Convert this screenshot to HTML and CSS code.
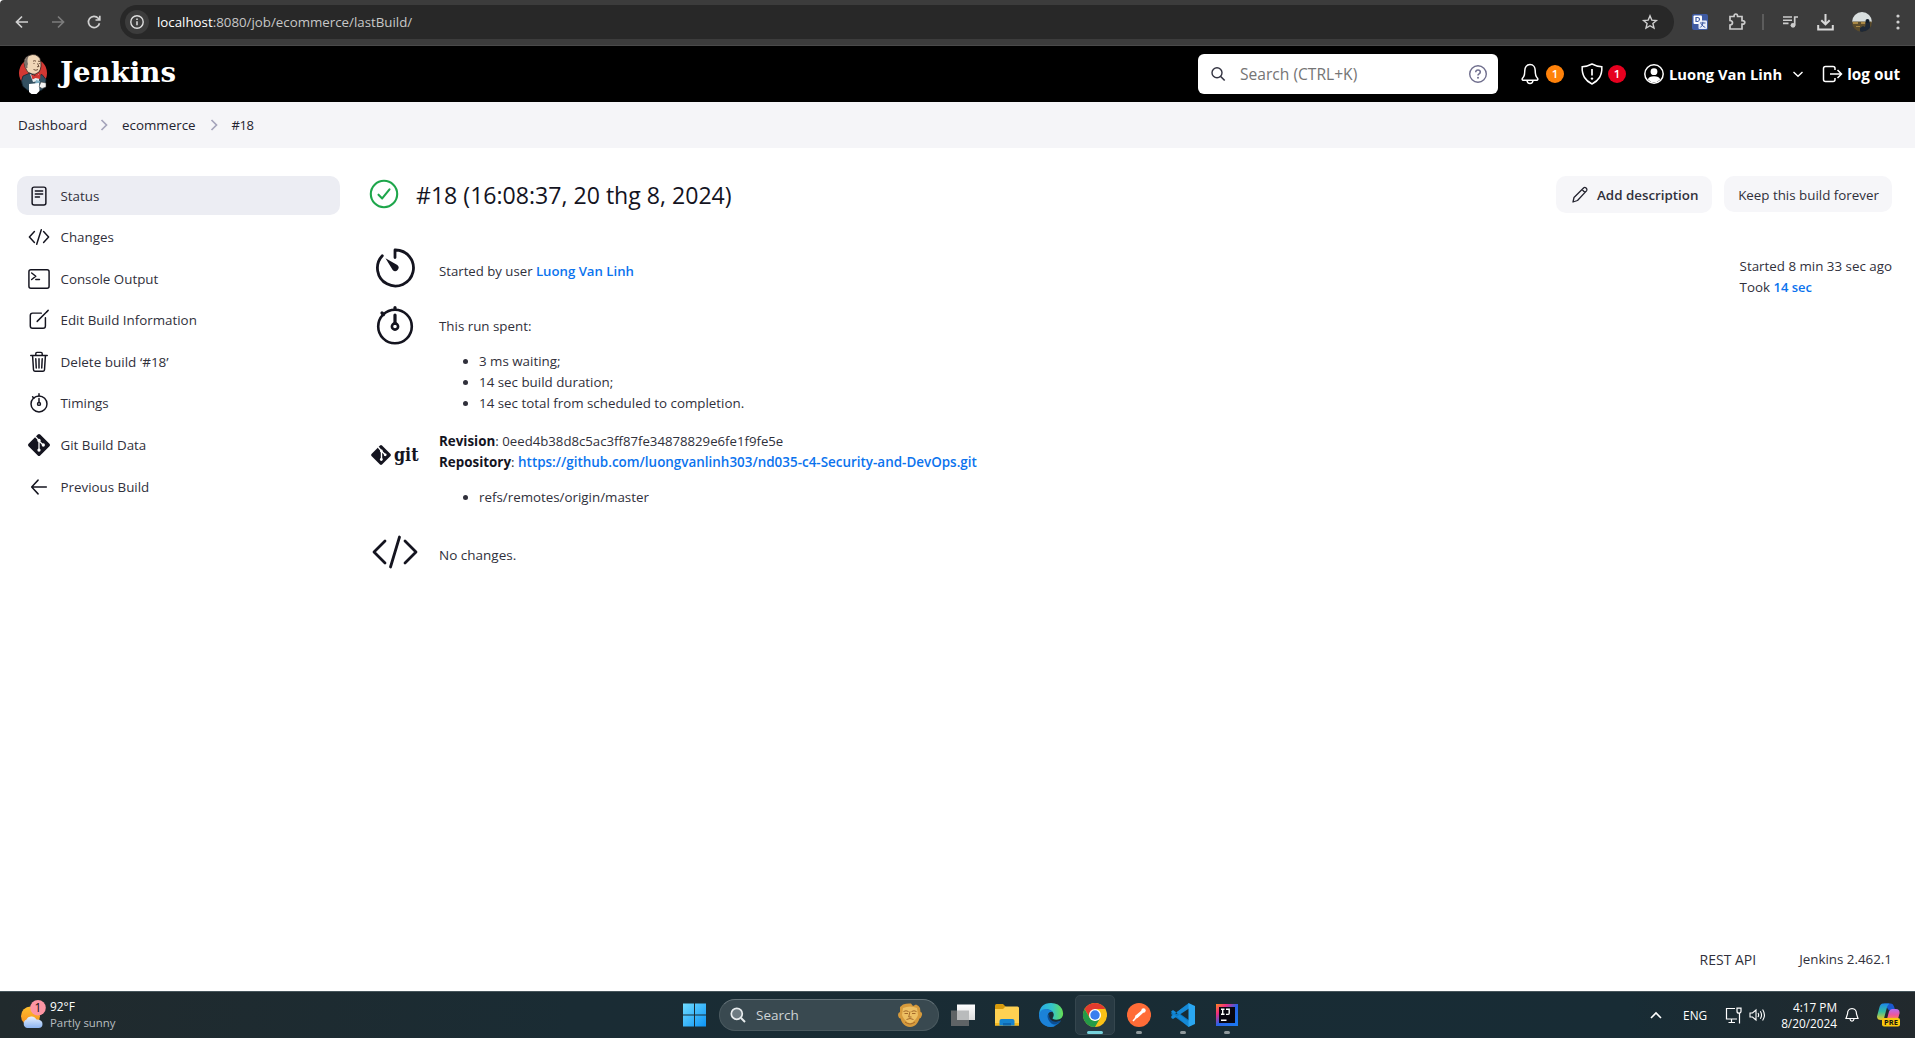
FILE: index.html
```html
<!DOCTYPE html>
<html lang="en">
<head>
<meta charset="utf-8">
<title>ecommerce #18 [Jenkins]</title>
<link rel="stylesheet" href="styles.css">
</head>
<body>
<div class="toolbar">
  <svg class="nav-icon" viewBox="0 0 16 16"><path d="M14 8H3M8 2.5 2.5 8 8 13.500" stroke="#d0d0d0"/></svg>
  <svg class="nav-icon" viewBox="0 0 16 16"><path d="M2 8h11M8 2.500 13.500 8 8 13.500" stroke="#7c7c7c"/></svg>
  <svg class="nav-icon" viewBox="0 0 16 16"><path d="M13.500 9.200A5.600 5.600 0 1 1 12.300 4.300L13.500 5.500M13.800 1.800V6H9.500" stroke="#d0d0d0"/></svg>
  <div class="url-bar">
    <span class="site-info"><svg width="14" height="14" viewBox="0 0 14 14"><circle cx="7" cy="7" r="6.200" fill="none" stroke="#dedede" stroke-width="1.400"/><path d="M7 6.200v4.100M7 3.500v1.400" stroke="#dedede" stroke-width="1.500"/></svg></span>
    <span class="url"><b>localhost</b>:8080/job/ecommerce/lastBuild/</span>
    <svg class="star" width="16" height="16" viewBox="0 0 16 16"><path d="M8 1.800 9.800 6.100l4.600.4-3.500 3 1.100 4.600L8 11.700l-4 2.400 1.100-4.600-3.500-3 4.600-.4z" fill="none" stroke="#cfcfcf" stroke-width="1.400"/></svg>
  </div>
  <div class="tools">
    <svg width="16" height="16" viewBox="0 0 16 16"><rect width="16" height="16" rx="2" fill="#3f5ba3"/><rect x="1.500" y="1.500" width="8.500" height="8.500" rx="1" fill="#fff"/><path d="M4 3.500h1.500q2 0 2 2t-2 2H4z" fill="none" stroke="#3f5ba3" stroke-width="1.200"/><rect x="6.500" y="6.500" width="8.500" height="8.500" rx="1" fill="#e8edfa"/><path d="M8 9h5.500M10.800 7.800V9q-.3 3-2.500 4.500M9.300 10q1.500 2.500 4 3.500" fill="none" stroke="#3f5ba3"/></svg>
    <svg width="18" height="18" viewBox="0 0 18 18" class="t-ext"><path d="M2 3.500h4q0-2.500 1.800-2.500t1.800 2.500h4.400v4.200q2.800 0 2.800 1.700t-2.800 1.700v4.900H2v-4q2.500-.3 2.500-2.300T2 7.500z" fill="none" stroke="#cdcdcd" stroke-width="1.700"/></svg>
    <span class="divider"></span>
    <svg width="16" height="16" viewBox="0 0 16 16" class="t-media"><path d="M1 3h9M1 6.200h9M1 9.400h5.500" stroke="#cdcdcd" stroke-width="1.600"/><path d="M12.700 11V3H16" fill="none" stroke="#cdcdcd" stroke-width="1.700"/><circle cx="11" cy="11.300" r="2.400" fill="#cdcdcd"/></svg>
    <svg width="17" height="17" viewBox="0 0 17 17" class="t-down"><path d="M8.500 0v10M4.300 6.200l4.200 4.200 4.200-4.200M1.200 11v4.500h14.600V11" fill="none" stroke="#d8d8d8" stroke-width="2"/></svg>
    <svg width="20" height="20" viewBox="0 0 20 20" class="t-ava"><clipPath id="av"><circle cx="10" cy="10" r="10"/></clipPath><g clip-path="url(#av)"><path fill="#d9dfdf" d="M0 0h20v11H0z"/><path fill="#5b4c2c" d="M0 9.500h20V20H0z"/><path fill="#a78644" d="M1 10h5v2H1zM9 10h4v2H9zM4 14h4v1H4z"/><path fill="#1e2836" d="m8 16 3-2 2 1 1-5 2-2 2 3v9H8z"/><circle cx="15.500" cy="9" r="2" fill="#111d2a"/></g></svg>
    <svg width="4" height="16" viewBox="0 0 4 16"><g fill="#d0d0d0"><circle cx="2" cy="2" r="1.600"/><circle cx="2" cy="8" r="1.600"/><circle cx="2" cy="14" r="1.600"/></g></svg>
  </div>
</div>

<header class="header">
  <svg class="butler" width="30" height="40" viewBox="0 0 30 40">
    <ellipse cx="15" cy="19" rx="14" ry="14.500" fill="#d33833"/>
    <path d="M7 13Q4 4 11 1.500q7-3 11 3Q24.500 13 21 18q-4 3.500-8 2Q9 19 7 13z" fill="#f0d6b7" stroke="#2c2220" stroke-width=".8"/>
    <path d="M7.500 14Q4.500 5 11 1.500 8.500 6 10 10q-1 1.500-.5 4z" fill="#7b716a"/>
    <path d="M15 7.200q1.500-1 3 0M20 7.200l2 .2M19.500 9.500l1.500 3-2 .3M15.500 15.500q2.500 1.500 4.500 0M16 9v1M21.300 9v1" fill="none" stroke="#5b3e2d" stroke-width=".9"/>
    <path d="M5 22l7-3 6 3.500 6-2 4 5-1 8-4 3H10l-5-4q-3-6 0-10.500z" fill="#335061" stroke="#10202b" stroke-width=".7"/>
    <path d="m12 20 6 3 3-3v7l-6 1z" fill="#e7edef"/><path d="m13 20.500 4.500 1.500 5-2-.3 5-4.700-1-3 1.500z" fill="#d33833"/>
    <path d="M18 26l4 1-1 4-4-1z" fill="#81b0c4"/>
    <path d="m11 30 10-1 .5 8-3 3h-5l-2.500-2z" fill="#fff"/><path d="M23 28l5 1v4l-4 1.500-3-2z" fill="#f3f3f3" stroke="#333" stroke-width=".5"/>
  </svg>
  <svg class="wordmark" width="120" height="40" viewBox="0 0 120 40"><text x="1" y="28" textLength="116" lengthAdjust="spacingAndGlyphs">Jenkins</text></svg>
  <div class="search-box">
    <svg width="16" height="16" viewBox="0 0 16 16"><circle cx="7" cy="6.800" r="5" fill="none" stroke="#333341" stroke-width="1.400"/><path d="m10.700 10.500 4 4" stroke="#333341" stroke-width="1.600"/></svg>
    <span>Search (CTRL+K)</span>
    <svg width="18" height="18" viewBox="0 0 18 18"><circle cx="9" cy="9" r="8.300" fill="none" stroke="#706f8e" stroke-width="1.400"/><path d="M6.700 7.200Q6.800 5 9 5t2.300 2q0 1.100-1.200 1.800T9 10.500" fill="none" stroke="#706f8e" stroke-width="1.500"/><circle cx="9" cy="12.800" r="1" fill="#706f8e"/></svg>
  </div>
  <svg class="bell" width="18" height="22" viewBox="0 0 18 22"><path d="M9 1.500C5.500 1.500 3.800 4.500 3.800 7.500c0 5-1 6.500-2.300 7.700-.7.800-.3 2 .7 2h13.600c1 0 1.400-1.200.7-2-1.300-1.200-2.300-2.700-2.300-7.700 0-3-1.700-6-5.200-6zM6 17.500q.3 3 3 3t3-3" fill="none" stroke="#fff" stroke-width="1.500"/></svg>
  <span class="badge orange">1</span>
  <svg class="shield" width="22" height="22" viewBox="0 0 22 22"><path d="M11 1Q6 3.500 1.200 3.800 .8 10 3.500 14.500 6 18.500 11 21q5-2.500 7.500-6.500Q21.200 10 20.800 3.800 16 3.500 11 1z" fill="none" stroke="#fff" stroke-width="1.500"/><path d="M11 6v6.500" stroke="#fff" stroke-width="1.700"/><circle cx="11" cy="15.600" r="1.200" fill="#fff"/></svg>
  <span class="badge red">1</span>
  <svg class="user" width="20" height="20" viewBox="0 0 20 20"><circle cx="10" cy="10" r="9.200" fill="none" stroke="#fff" stroke-width="1.500"/><circle cx="10" cy="7.700" r="3.400" fill="#fff"/><path d="M3.800 15.500Q5 12.300 10 12.300t6.200 3.200Q13.700 18.200 10 18.200t-6.200-2.700z" fill="#fff"/></svg>
  <b class="user-name">Luong Van Linh</b>
  <svg class="caret" width="12" height="12" viewBox="0 0 12 12"><path d="m1.500 4 4.500 4.300L10.500 4" fill="none" stroke="#fff" stroke-width="1.400"/></svg>
  <svg class="exit" width="21" height="18" viewBox="0 0 21 18"><path d="M13 5V3.500Q13 1.500 11 1.500H3.500q-2 0-2 2v11q0 2 2 2H11q2 0 2-2V13M8 9h11M15.500 5l4 4-4 4" fill="none" stroke="#fff" stroke-width="1.500"/></svg>
  <b class="logout">log out</b>
</header>

<nav class="crumbs">
  <span class="c1">Dashboard</span>
  <svg width="8" height="12" viewBox="0 0 8 12"><path d="m1.500 1 5 5-5 5"/></svg>
  <span class="c2">ecommerce</span>
  <svg width="8" height="12" viewBox="0 0 8 12"><path d="m1.500 1 5 5-5 5"/></svg>
  <span class="c3">#18</span>
</nav>

<div class="content">
  <aside class="side">
    <a class="active"><svg viewBox="0 0 24 24"><rect x="4.500" y="2.300" width="15" height="19.400" rx="2.200"/><path d="M8 6.500h8M8 9.800h8M8 13h4.500"/></svg>Status</a>
    <a><svg viewBox="0 0 24 24"><path d="M7 6 1.500 12 7 18M17 6l5.500 6-5.500 6M14.500 4l-5 16"/></svg>Changes</a>
    <a><svg viewBox="0 0 24 24"><rect x="1" y="2" width="22" height="20" rx="2.200"/><path d="m4 5.500 4.500 3.500L4 12.500M8.500 12.500h4"/></svg>Console Output</a>
    <a><svg viewBox="0 0 24 24"><path d="M14.500 4.500H5q-2.500 0-2.500 2.500v11.500Q2.500 21 5 21h11.500Q19 21 19 18.500V9.500M10 13.500 20.500 3"/><path d="m20.500 3 1.500-1.500"/></svg>Edit Build Information</a>
    <a><svg viewBox="0 0 24 24"><path d="m5 5 1 15.500q0 1.500 1.500 1.500h9q1.500 0 1.500-1.500L19 5M3 5h18M8.500 5V3q0-1.500 1.300-1.500h4.400q1.300 0 1.300 1.500v2M12 8.500v10M8.500 8.500l.5 10M15.500 8.500l-.5 10"/></svg><span class="wide-text">Delete build ‘#18’</span></a>
    <a><svg viewBox="0 0 24 24"><circle cx="12" cy="13" r="8.700"/><path d="M12 7v4M12 2v2.200M5 5.200l1.500 1.500"/><circle cx="12" cy="13" r="1.600"/></svg>Timings</a>
    <a><svg viewBox="0 0 24 24"><path class="solid" d="m10.700.6a1.800 1.800 0 0 1 2.600 0l10.100 10.100a1.800 1.800 0 0 1 0 2.600L13.300 23.400a1.800 1.800 0 0 1-2.600 0L.6 13.300a1.800 1.800 0 0 1 0-2.600z"/><path class="branch" d="m8.200 3 3.800 4v10.500M12 7.500l4.500 4.500"/><g class="nodes"><circle cx="12" cy="7" r="1.800"/><circle cx="12" cy="17.500" r="1.800"/><circle cx="16.700" cy="12" r="1.800"/></g></svg>Git Build Data</a>
    <a><svg viewBox="0 0 24 24"><path d="M20 12H4.500M11 4.500 4 12l7 7.500"/></svg>Previous Build</a>
  </aside>

  <main class="main">
    <div class="title-row">
      <svg width="30" height="30" viewBox="0 0 30 30"><circle cx="15" cy="15" r="13.200" fill="none" stroke="#1ea64b" stroke-width="2.100"/><path d="m9.500 15.700 3.700 3.700 7.300-9" fill="none" stroke="#1ea64b" stroke-width="2.100" stroke-linecap="round" stroke-linejoin="round"/></svg>
      <h1>#18 (16:08:37, 20 thg 8, 2024)</h1>
      <div class="actions">
        <button class="add"><svg width="18" height="18" viewBox="0 0 18 18"><path d="M2 16l1-4.500L12.800 1.700q1-.8 2.300.4t.6 2.500L6.500 14.500 2 16zM11 3.500 14.200 6.700" fill="none" stroke="#23232f" stroke-width="1.300" stroke-linejoin="round"/></svg>Add description</button>
        <button class="keep">Keep this build forever</button>
      </div>
    </div>
    <div class="body-row">
      <div class="facts">
        <div class="fact f1">
          <svg viewBox="0 0 48 48"><path d="M24 13.500V6A18 18 0 1 1 11.300 11.700" stroke-width="2.800"/><path class="solid" d="m14.500 14.200 11.800 6.800a3.400 3.400 0 1 1-4.600 5z"/></svg>
          <div>Started by user <a>Luong Van Linh</a></div>
        </div>
        <div class="fact f2">
          <svg viewBox="0 0 48 48"><circle cx="24" cy="25.500" r="16.800" stroke-width="2.600"/><circle cx="24" cy="25.500" r="3.100" stroke-width="2.600"/><path d="M24 22.500v-8.500M24 8V6.500M12.500 13.500 11 12" stroke-width="3.200"/></svg>
          <div>This run spent:
            <ul><li>3 ms waiting;</li><li>14 sec build duration;</li><li>14 sec total from scheduled to completion.</li></ul>
          </div>
        </div>
        <div class="fact f3">
          <svg viewBox="0 0 48 48"><path class="solid" d="m9 14.500q1-.9 2 0l8.500 8.500q.9 1 0 2L11 33.500q-1 .9-2 0L.5 25q-.9-1 0-2z"/><path class="branch" d="m7.500 16.500 3 3.500v8.500M10.500 20l3.500 3.500"/><g class="nodes"><circle cx="10.300" cy="20" r="1.400"/><circle cx="10.300" cy="28.500" r="1.400"/><circle cx="14.200" cy="23.800" r="1.400"/></g><text x="23" y="29.500" textLength="24.500" lengthAdjust="spacingAndGlyphs">git</text></svg>
          <div><b>Revision</b>: <span class="hash">0eed4b38d8c5ac3ff87fe34878829e6fe1f9fe5e</span><br><b>Repository</b>: <a class="repo">https://github.com/luongvanlinh303/nd035-c4-Security-and-DevOps.git</a>
            <ul><li>refs/remotes/origin/master</li></ul>
          </div>
        </div>
        <div class="fact f4">
          <svg viewBox="0 0 48 48"><path d="M14 13 3 24l11 11M34 13l11 11-11 11M28.500 9l-9 30" stroke-width="2.800"/></svg>
          <div>No changes.</div>
        </div>
      </div>
      <div class="timing">Started 8 min 33 sec ago<br>Took <a>14 sec</a></div>
    </div>
    <footer class="foot"><span class="api">REST API</span><span>Jenkins 2.462.1</span></footer>
  </main>
</div>

<div class="taskbar">
  <div class="weather">
    <svg width="26" height="30" viewBox="0 0 26 30"><defs><linearGradient id="sun" x2="0" y2="1"><stop stop-color="#ffc02e"/><stop offset="1" stop-color="#f58b1e"/></linearGradient><linearGradient id="cl" x2="0" y2="1"><stop stop-color="#e8f2ff"/><stop offset="1" stop-color="#8db5f2"/></linearGradient></defs><circle cx="9.500" cy="16" r="9.500" fill="url(#sun)"/><path d="M6 28a4.500 4.500 0 0 1-.5-8.500Q7 16 11 16.500q3.500.3 4.500 3 6 0 6 4.500 0 4-4 4z" fill="url(#cl)"/><circle cx="17" cy="7.800" r="7.800" fill="#fd95a3"/><text x="17" y="12" text-anchor="middle">1</text></svg>
    <div><strong>92°F</strong><br>Partly sunny</div>
  </div>
  <div class="apps">
    <svg width="24" height="24" viewBox="0 0 24 24"><defs><linearGradient id="win" x2="1" y2="1"><stop stop-color="#6fdcff"/><stop offset="1" stop-color="#0c93f5"/></linearGradient></defs><path fill="url(#win)" d="M0 .500h11v11H0zM12 .500h11v11H12zM0 12.500h11v11H0zM12 12.500h11v11H12z"/></svg>
    <div class="tb-search">
      <svg width="16" height="16" viewBox="0 0 16 16"><circle cx="6.800" cy="6.800" r="5.500" fill="#6e7b82" stroke="#e8ecee" stroke-width="1.700"/><path d="m11 11 4 4" stroke="#e8ecee" stroke-width="2"/></svg>
      <span>Search</span>
      <svg width="26" height="25" viewBox="0 0 26 25"><path d="M3 4 6 1.500Q10 0 14 .5l2 2.500 3-1.500q3 1 4 3.500l.5 4q2 0 1.500 3-1 3.500-2.500 3.500-2 6-5.500 7.500-4 2-8 0Q5 21 3.500 15.500q-2 0-2.500-3.500 0-2.500 2-3z" fill="#d69a3c"/><path d="M6 5q7-3 14 0l1 7q-2 6-8 8.500Q7 18 5 12z" fill="#edbf63"/><path d="M6.500 8.500q2.500-1.500 5 0M14.500 8.500q2.500-1.500 5 0M7.500 10.500h3.500M15 10.500h3.500M13 8.500l-1.300 5.500h2.800M9.500 16.500q3.500-2 7 0M8 19q5 4 10 0" fill="none" stroke="#a4692a"/></svg>
    </div>
    <svg class="tview" width="24" height="23" viewBox="0 0 24 23"><defs><linearGradient id="tv" x2="0" y2="1"><stop stop-color="#fff"/><stop offset="1" stop-color="#dcdcdc"/></linearGradient></defs><path fill="#5f6466" d="M0 6.500h18v15.500H0z"/><path fill="url(#tv)" d="M6 .5h18V16H6z"/><path fill="#b9bbbc" d="M6 6.500h12V16H6z"/></svg>
    <svg class="ic" viewBox="0 0 24 24"><path fill="#d89b0c" d="M0 2.500Q0 1 1.500 1H8l2.500 2.500V9H0z"/><path fill="#ffd152" d="M0 6h8l2.500-2.500h12Q24 3.500 24 5v17.500H0z"/><path fill="#f5b91f" d="M0 20h24v2.500H0z"/><path fill="#1583cf" d="M4.500 22.500V18q0-2 2-2h11q2 0 2 2v4.500z"/><path fill="#0d66ae" d="M8 20h8v2.500H8z"/></svg>
    <svg class="ic" viewBox="0 0 24 24"><defs><linearGradient id="eg" x2="1"><stop stop-color="#26a7e8"/><stop offset=".55" stop-color="#35c5c8"/><stop offset="1" stop-color="#66df52"/></linearGradient></defs><path fill="#0f6fc5" d="M.2 11Q0 18 5 21.800q7 4.500 14-.8 1.500-1.300 3-3.500-6 3-10 .5-3-2.500-2.500-6z"/><path fill="url(#eg)" d="M0 12Q.5 0 12 0q8 0 11 6 3 7-2 10-4 1.500-7 0-.8-.8.200-2 1.500-3-1-5.500Q9 5 4 8 1 10 0 12z"/><path fill="#1b82d8" d="M0 12q1-5.500 6-6 5.500 0 8 3-4-1-5.200 3Q8 17 13 21q2 2 4 1.500-5 3-11 0Q0 19 0 12z"/><path fill="#0c4d92" d="M8.700 12Q8 17 12.500 20.500q5 2.500 9.500-3-7 3-10.500-1Q9.500 14 10.500 11z"/></svg>
    <div class="tile"><svg class="ic" viewBox="0 0 24 24"><circle cx="12" cy="12" r="12" fill="#fbc116"/><path fill="#e33b2e" d="M1.600 6A12 12 0 0 1 22.400 6H12L7 15z"/><path fill="#249b48" d="M1.600 6A12 12 0 0 0 12 24l5.200-9L12 18 6.800 15z"/><circle cx="12" cy="12" r="6" fill="#fff"/><circle cx="12" cy="12" r="4.700" fill="#3a7fee"/></svg><i class="run wide"></i></div>
    <div class="app"><svg class="ic" viewBox="0 0 24 24"><circle cx="12" cy="12" r="12" fill="#ff6c37"/><path d="m6 18 7-7.500" stroke="#fff" stroke-width="1.500"/><path fill="#fff" d="m7.500 15.500 1-3 6-5 2 2-6 5.500z"/><circle cx="16.500" cy="7.500" r="2.200" fill="#fff"/></svg><i class="run"></i></div>
    <div class="app"><svg class="ic" viewBox="0 0 24 24"><path fill="#0b79c4" d="M17.500 0 5.500 11 2 8.500.3 9.500v1.800L18 24l.5-6.500L6.500 9z" /><path fill="#1589d6" d="M17.500 24 0 8.500 2 7l16 11.500zM.3 13v2L2 16 18 5.500V0z"/><path fill="#2aa7f2" d="m17.500 0 6.500 3v18l-6.500 3z"/></svg><i class="run"></i></div>
    <div class="app"><svg class="ic" viewBox="0 0 24 24"><defs><linearGradient id="ij" x2="1" y2="1"><stop stop-color="#ff8a1f"/><stop offset=".25" stop-color="#f02c7d"/><stop offset=".5" stop-color="#2b62e8"/><stop offset="1" stop-color="#187bf3"/></linearGradient></defs><path fill="url(#ij)" d="M1 1h22v22H1z"/><path fill="#080510" d="M4 4h16v16H4z"/><path d="M6 6.200h3.500M7.700 6.200v5M6 11.200h3.500M11 6.200h3.200v4q0 1.200-1.500 1.200H11M6 17.200h5.500" fill="none" stroke="#fff" stroke-width="1.400"/></svg><i class="run"></i></div>
  </div>
  <div class="tray">
    <svg class="up" width="12" height="8" viewBox="0 0 12 8"><path d="m1 7 5-5 5 5" fill="none" stroke="#fff" stroke-width="1.600"/></svg>
    <span class="lang">ENG</span>
    <svg class="net" width="17" height="17" viewBox="0 0 17 17"><path d="M10 1.500H1.500V12H12M6.500 12v3.500M3.500 15.500H10M14.500 6.500v10M12 1.200h4v3q0 2-2 2t-2-2z" fill="none" stroke="#fff" stroke-width="1.200"/></svg>
    <svg class="vol" width="18" height="14" viewBox="0 0 18 14"><path d="M1 5v4h2.500L7 12V2L3.500 5zM9 5q1.300 2 0 4M11.300 3.200q2.500 3.800 0 7.600M13.600 1.500q3.700 5.500 0 11" fill="none" stroke="#fff" stroke-width="1.100"/></svg>
    <div class="clock">4:17 PM<br>8/20/2024</div>
    <svg class="tbell" width="14" height="16" viewBox="0 0 14 16"><path d="M7 1.500Q2.500 1.800 2.500 7L1 11.500h12L11.500 7Q11.500 1.800 7 1.500zM5 12q.3 2.200 2 2.200T9 12" fill="none" stroke="#fff" stroke-width="1.200"/></svg>
    <svg width="24" height="24" viewBox="0 0 24 24"><defs><linearGradient id="ca" x2="0" y2="1"><stop stop-color="#1d88e8"/><stop offset=".5" stop-color="#35bda0"/><stop offset="1" stop-color="#f2cd22"/></linearGradient><linearGradient id="cb" x2="0" y2="1"><stop stop-color="#b26cf0"/><stop offset=".6" stop-color="#f0569b"/><stop offset="1" stop-color="#fb8b4a"/></linearGradient></defs><path fill="#1b58cf" d="M8 .500h7q2 0 3 3l1 3-6 1z"/><path fill="url(#ca)" d="M7 .500h6.500Q11.500 2 10.500 6L8 15.500Q7.500 17 5 17 1 17 1 13.500L3.500 4Q4.500.500 7 .500z"/><path fill="url(#cb)" d="M16 6h4q4 0 3.500 4.500L22 16H11l2-7.500Q14 6 16 6z"/><rect x="6" y="15" width="18" height="8.500" rx="2" fill="#fbc80e"/><text class="pre" x="15" y="22" text-anchor="middle">PRE</text></svg>
  </div>
</div>
</body>
</html>
```
FILE: styles.css
```css
* { box-sizing: border-box; }
body {
  margin: 0; width: 1915px; height: 1038px; overflow: hidden;
  display: flex; flex-direction: column;
  background: #fff; color: #14141f;
  font: 13.35px/21px "Open Sans", "Noto Sans", sans-serif;
}
svg { display: block; flex: none; overflow: visible; }

/* browser toolbar */
.toolbar { height: 46px; flex: none; background: #3c3c3c; border-bottom: 1px solid #4a4a4a; border-top-left-radius: 4px; display: flex; align-items: center; padding: 0 14px 1px 14px; }
.nav-icon { width: 16px; height: 16px; margin-right: 20px; fill: none; stroke-width: 1.7; }
.url-bar { width: 1554px; height: 34px; margin-left: -2px; border-radius: 17px; background: #282828; display: flex; align-items: center; padding: 0 16px 0 5px; color: #c7c7c7; }
.site-info { width: 24px; height: 24px; border-radius: 50%; background: #3c3c3c; display: grid; place-items: center; margin-right: 8px; }
.url { font-size: 13.3px; }
.url b { font-weight: 400; color: #fff; }
.star { margin-left: auto; }
.tools { display: flex; align-items: center; margin-left: 18px; }
.t-ext { margin-left: 20px; }
.divider { width: 2px; height: 16px; background: #5c5c5c; margin: 0 18px 0 16px; }
.t-media { margin-right: 19px; }
.t-down { margin-right: 18px; }
.t-ava { margin-right: 24px; }

/* Jenkins header */
.header { height: 56px; flex: none; background: #000; color: #fff; display: flex; align-items: center; padding-left: 18px; }
.wordmark { margin-left: 11px; }
.wordmark text { font: bold 28px "DejaVu Serif", serif; fill: #fff; }
.search-box { width: 300px; height: 40px; margin-left: 1019px; border-radius: 6px; background: #fff; display: flex; align-items: center; padding: 0 11px 1px 12px; font-size: 15.6px; color: #757575; }
.search-box span { margin: 1px auto 0 14px; }
.bell { margin-left: 23px; }
.badge { width: 18px; height: 18px; border-radius: 50%; font: 600 11.5px/18px "Open Sans", sans-serif; text-align: center; }
.orange { background: #ff820a; margin: 0 17px 0 7px; }
.red { background: #e6001f; margin: 0 18px 0 5px; }
.user-name { font-size: 14.74px; margin-left: 5px; }
.caret { margin: 0 18px 0 10px; }
.logout { font-size: 15.3px; margin-left: 4px; }

.crumbs { height: 46px; flex: none; background: #f5f5f8; display: flex; align-items: center; padding-left: 18px; font-weight: 500; color: #23232f; }
.crumbs svg { fill: none; stroke: #a5a4bb; stroke-width: 1.7; }
.c1 { margin-right: 13px; font-size: 13.4px; }
.c2 { margin: 0 14px; }
.c3 { margin-left: 14px; font-size: 13px; letter-spacing: -.5px; }

/* page */
.content { flex: 1; display: flex; min-height: 0; padding: 28px 23px 0 17px; }
.side { width: 323px; flex: none; display: flex; flex-direction: column; gap: 2.6px; }
.side a { height: 39px; flex: none; border-radius: 10px; display: flex; align-items: center; gap: 10.5px; padding: 1px 0 0 11px; color: #30303b; font-weight: 400; }
.side a.active { background: #ecedf3; font-weight: 500; }
.wide-text { font-size: 13.5px; }
.side svg { width: 22px; height: 22px; margin-top: -1px; fill: none; stroke: #14141f; stroke-width: 1.6; stroke-linecap: round; stroke-linejoin: round; }
svg .solid { fill: #14141f; stroke: none; }
svg .branch { fill: none; stroke: #fff; stroke-width: 1.4; }
svg .nodes { fill: #fff; stroke: none; }

.main { flex: 1; margin-left: 29px; display: flex; flex-direction: column; }
.title-row { display: flex; align-items: flex-start; height: 66px; }
.title-row > svg { margin-top: 3px; }
h1 { margin: 3px 0 0 17px; font-size: 23.1px; line-height: 32px; font-weight: 500; }
.actions { margin-left: auto; display: flex; align-items: flex-start; gap: 12px; }
button { border: 0; border-radius: 10px; background: #f6f6f9; color: #30303b; font: inherit; padding: 0; }
.add { width: 156px; height: 37px; font-weight: 600; display: flex; align-items: center; gap: 8px; padding: 1px 0 0 15px; }
.keep { width: 168px; height: 36px; padding: 2px 0 0 1px; }

.body-row { display: flex; justify-content: space-between; color: #30303b; }
.facts { padding: 2px 0 0 2px; }
.fact { display: flex; gap: 20px; }
.fact > svg { width: 48px; height: 48px; fill: none; stroke: #14141f; stroke-linecap: round; stroke-linejoin: round; }
.fact text { font: bold 19px "DejaVu Serif", serif; fill: #14141f; stroke: none; }
.f1 { height: 57px; }
.f1 > div { padding-top: 17px; }
.f1 > div, .f1 a { font-size: 13.2px; }
.f2 { height: 130px; }
.f2 > div { padding-top: 14.5px; }
.f3 { height: 97px; }
.f3 > div { padding-top: .4px; line-height: 20.8px; }
.f3 b { font-size: 13.4px; color: #14141f; }
.f4 > div { padding-top: 17px; font-size: 13.5px; }
a { color: #0b73ee; font-weight: 600; text-decoration: none; }
.repo { font-size: 13.45px; }
.hash { font-size: 13.2px; }
ul { margin: 14px 0 0; padding-left: 40px; }
.timing { padding-top: 14px; }
.timing a { font-size: 13px; }
.foot { margin-top: auto; display: flex; justify-content: flex-end; gap: 43px; padding-bottom: 21px; color: #30303b; }
.api { font-weight: 500; font-size: 14px; }

/* taskbar */
.taskbar { height: 47px; flex: none; border-top: 1px solid #46555b; background: linear-gradient(90deg, #212a2d 0, #1a2c34 30%, #182c35 85%, #22292d 100%); color: #fff; display: flex; align-items: center; padding-left: 21px; font-size: 11.8px; line-height: 16px; }
.weather { width: 662px; display: flex; align-items: center; gap: 3px; color: #b8bec0; font-size: 11.4px; }
.weather > div { margin-top: -2px; }
.weather strong { color: #fff; font-weight: 400; font-size: 11.9px; }
.weather text { font: 12px "Open Sans", sans-serif; fill: #111; }
.apps { display: flex; align-items: center; }
.tb-search { width: 220px; height: 32px; margin: 0 12px 0 12px; border-radius: 16px; background: #394950; border: 1px solid #4a595f; border-top-color: #66747a; display: flex; align-items: center; padding: 0 15px 0 10px; font-size: 13.5px; color: #cfd4d6; }
.tb-search span { margin: 0 auto 0 10px; }
.ic { width: 24px; height: 24px; margin-left: 20px; }
.tile { width: 40px; height: 40px; margin-left: 12px; border-radius: 5px; background: #283a43; border: 1px solid #35464e; }
.tile .ic { margin: 7px 0 0 7px; }
.tile + .app { margin-left: 12px; }
.app { width: 24px; height: 40px; margin-left: 20px; }
.app .ic { margin: 8px 0 0; }
.run { display: block; width: 6px; height: 3px; border-radius: 2px; background: #8e989c; margin: 4px auto 0 9px; }
.run.wide { width: 16px; background: #77d2dc; margin-left: 11px; }
.tray { margin-left: auto; display: flex; align-items: center; padding-right: 15px; }
.up { margin-right: 21px; }
.lang { margin-right: 18px; }
.net { margin-right: 7px; }
.clock { margin: 0 8px 0 14px; text-align: right; }
.tbell { margin-right: 17px; }
.pre { font: bold 7.5px "Open Sans", sans-serif; fill: #111; }
```
